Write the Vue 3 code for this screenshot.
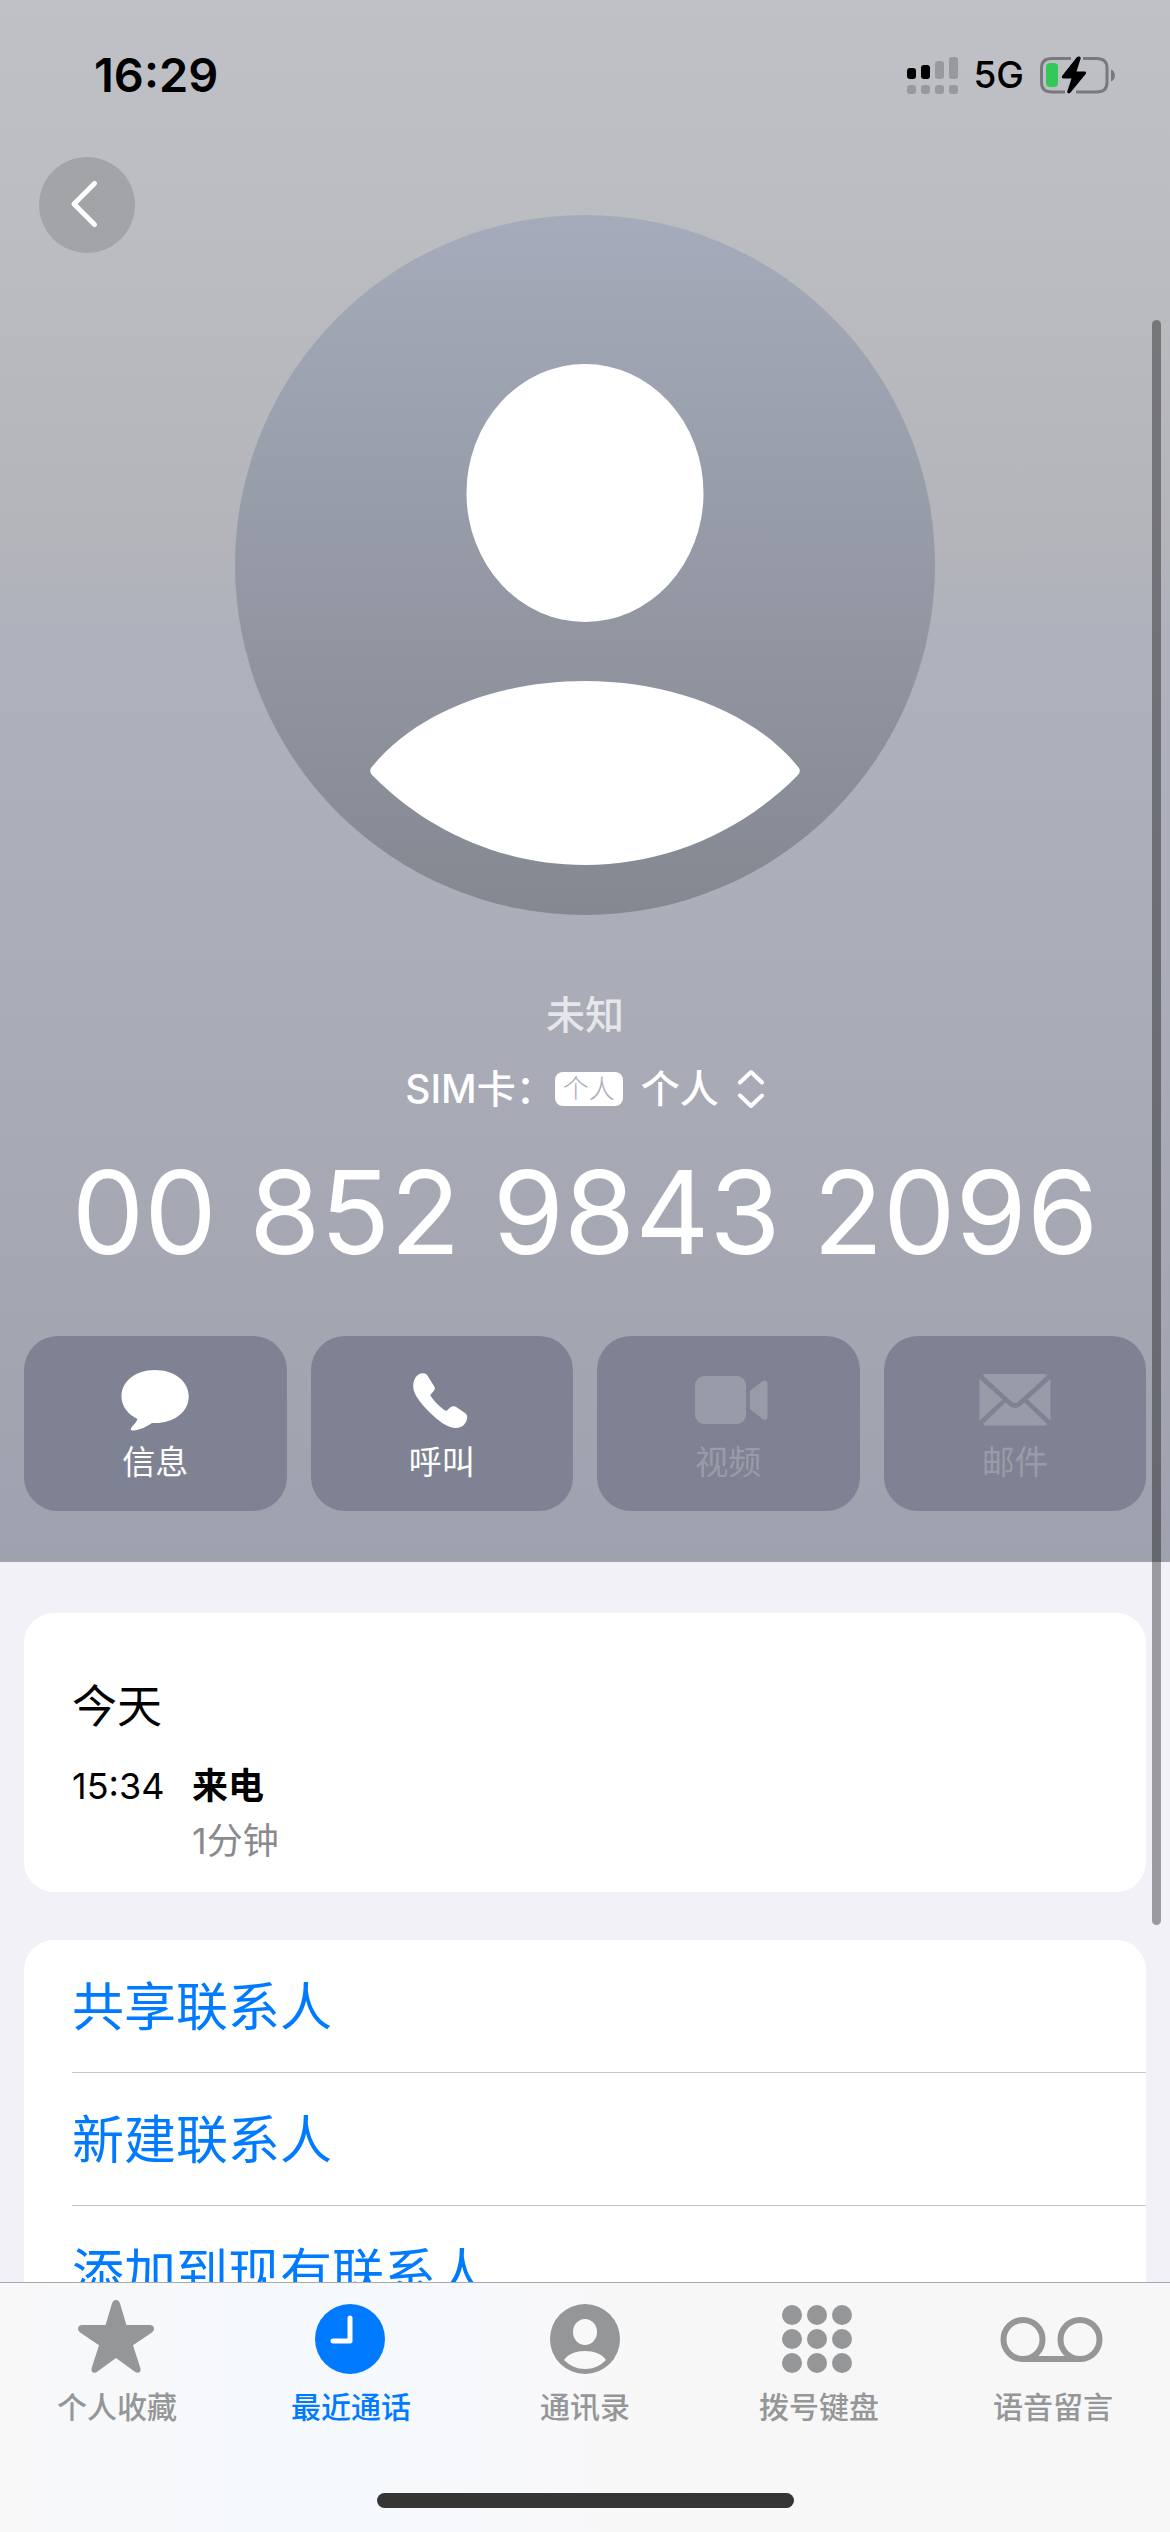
<script setup>
const actions = [
  { id: 'message', label: '信息', disabled: false },
  { id: 'call', label: '呼叫', disabled: false },
  { id: 'video', label: '视频', disabled: true },
  { id: 'mail', label: '邮件', disabled: true }
]

const links = ['共享联系人', '新建联系人', '添加到现有联系人']

const tabs = [
  { id: 'favorites', label: '个人收藏' },
  { id: 'recents', label: '最近通话' },
  { id: 'contacts', label: '通讯录' },
  { id: 'keypad', label: '拨号键盘' },
  { id: 'voicemail', label: '语音留言' }
]
const current = 'recents'
const dots = [15, 39, 63].flatMap((y) => [25, 50, 75].map((x) => ({ x, y })))
</script>

<template>
  <div class="phone">
    <main class="scroller">
      <header class="hero">
        <div class="status">
          <span class="clock">16:29</span>
          <div class="indicators">
            <svg class="signal" width="52" height="38" viewBox="0 0 52 38" aria-hidden="true">
              <g fill="#000">
                <rect x="0" y="12" width="9" height="11" rx="3" />
                <rect x="14" y="9" width="9" height="14" rx="3" />
              </g>
              <g fill="#98999d">
                <rect x="28" y="5" width="9" height="18" rx="3" />
                <rect x="42" y="1" width="9" height="22" rx="3" />
                <rect x="0" y="29" width="9" height="9" rx="3" />
                <rect x="14" y="29" width="9" height="9" rx="3" />
                <rect x="28" y="29" width="9" height="9" rx="3" />
                <rect x="42" y="29" width="9" height="9" rx="3" />
              </g>
            </svg>
            <span class="network">5G</span>
            <svg class="battery" width="76" height="38" viewBox="0 0 76 38" aria-hidden="true">
              <path d="M31 2.500H12C5 2.500 1.500 6 1.500 12V26.500C1.500 32.500 5 36 12 36H25M43 2.500H56.500C63.500 2.500 67 6 67 12V26.500C67 32.500 63.500 36 56.500 36H36" fill="none" stroke="#78797d" stroke-width="3" />
              <rect x="6" y="7" width="12" height="24" rx="4" fill="#34c759" />
              <path d="M37 1C39 -.2 41.300 .5 40.500 3L36.500 15.500H44.500C46.200 15.500 46.500 17 45.500 18.300L30.500 36.500C28.800 38.200 26.800 37.200 27.400 35L31.500 22.500H23.500C21.800 22.500 21.300 21 22.400 19.600Z" fill="#000" />
              <path d="M71 13.500C76.300 15.500 76.300 23.500 71 25.500Z" fill="#78797d" />
            </svg>
          </div>
        </div>

        <div class="portrait">
          <button class="back" type="button" aria-label="返回">
            <svg width="96" height="96" viewBox="0 0 96 96" aria-hidden="true">
              <path d="M55.500 26.500L35 47L55.500 67.500" fill="none" stroke="#fff" stroke-width="5" stroke-linecap="round" stroke-linejoin="round" />
            </svg>
          </button>
          <svg class="avatar" viewBox="0 0 700 700" aria-hidden="true">
            <defs>
              <linearGradient id="avatar-fill" x1="0" y1="0" x2="0" y2="1">
                <stop offset="0" stop-color="#a5abba" />
                <stop offset="1" stop-color="#848891" />
              </linearGradient>
            </defs>
            <circle cx="350" cy="350" r="350" fill="url(#avatar-fill)" />
            <ellipse cx="350" cy="278" rx="118.500" ry="129" fill="#fff" />
            <path d="M136 553C180 498 262 466 350 466S520 498 564 553Q566 557 563 560C505 619 428 650 350 650S195 619 137 560Q134 557 136 553Z" fill="#fff" />
          </svg>
        </div>

        <p class="unknown">未知</p>
        <button class="sim" type="button">
          <span>SIM卡：</span>
          <span class="badge">个人</span>
          <span>个人</span>
          <svg width="28" height="40" viewBox="0 0 28 40" aria-hidden="true">
            <path d="M3 13.500L14 3L25 13.500M3 26.500L14 37L25 26.500" fill="none" stroke="#fff" stroke-width="4" stroke-linecap="round" stroke-linejoin="round" />
          </svg>
        </button>
        <h1 class="number">00 852 9843 2096</h1>

        <div class="actions">
          <button v-for="a in actions" :key="a.id" type="button" class="action" :disabled="a.disabled">
            <svg width="80" height="64" viewBox="0 0 80 64" fill="currentColor" aria-hidden="true">
              <path v-if="a.id === 'message'" d="M40 2C59 2 73.700 13 73.700 28.400S59 55 40 55H37C32 58.500 25 62 18.500 62.500C15.500 62.700 15 61 17 58.700C19.500 56 21.500 54 22.500 51C13 46 6.500 38.500 6.500 28.400C6.500 13 21 2 40 2Z" />
              <path v-if="a.id === 'call'" transform="translate(2 0)" d="M19.100 5.300C21.500 5.300 23 6.500 24 8.500L30.300 18.500C31.300 20.300 30.800 21.800 29.600 23.200L27 26C26.200 27 26.500 27.800 27 28.600C30 33 35 38.500 40.500 42.300C41.500 42.900 42.400 43 43.200 42.200L46.500 39.300C48.300 38 50.300 37.700 52.200 39L61 45C63.300 46.600 63.700 49 62.800 52C61.200 57 57 60 51.700 60C45 60 37 55 29 47.500C19 38 9.200 27 9.200 18.700C9.200 11 13 5.300 19.100 5.300Z" />
              <template v-if="a.id === 'video'">
                <rect x="7" y="8" width="51" height="48" rx="9" />
                <path d="M62 23L74 13.500C76.500 11.800 79.500 12.500 79.500 15.500V49C79.500 52 76.500 52.500 74 50.500L62 41Z" />
              </template>
              <template v-if="a.id === 'mail'">
                <path d="M8 7.500Q9 6 11 6H69Q71 6 72 7.500L43.500 33.500Q40 36.500 36.500 33.500Z" />
                <path d="M4.500 11L27.500 31.500L4.500 52.500ZM75.500 11V52.500L52.500 31.500Z" />
                <path d="M8 56L30.500 34.500L34 37.500Q40 42.500 46 37.500L49.500 34.500L72 56Q71 57.500 69 57.500H11Q9 57.500 8 56Z" />
              </template>
            </svg>
            <span>{{ a.label }}</span>
          </button>
        </div>
      </header>

      <section class="card history">
        <h2>今天</h2>
        <dl>
          <dt>15:34</dt>
          <dd class="kind">来电</dd>
          <dd class="length">1分钟</dd>
        </dl>
      </section>

      <ul class="card links">
        <li v-for="l in links" :key="l"><button type="button">{{ l }}</button></li>
      </ul>

      <div class="thumb" aria-hidden="true"></div>
    </main>

    <footer class="tabbar">
      <nav class="tabs">
        <button v-for="t in tabs" :key="t.id" type="button" class="tab" :class="{ active: t.id === current }">
          <svg width="108" height="76" viewBox="-2 0 108 76" fill="currentColor" aria-hidden="true">
            <path v-if="t.id === 'favorites'" d="M51 0Q54 0 55 3.500L61.400 25H84.500Q89 25 89 29Q89 31 86.500 32.800L68 45.300L75.500 68.500Q76 72.700 72.500 72.700Q71 72.700 69.500 71.500L51 58L32.500 71.500Q31 72.700 29.500 72.700Q26 72.700 26.500 68.500L34 45.300L15.500 32.800Q13 31 13 29Q13 25 17.500 25H40.600L47 3.500Q48 0 51 0Z" />
            <template v-if="t.id === 'recents'">
              <circle cx="51" cy="39" r="35" />
              <path d="M51 18V41H34" fill="none" stroke="#fff" stroke-width="5" stroke-linecap="round" stroke-linejoin="round" />
            </template>
            <template v-if="t.id === 'contacts'">
              <circle cx="52" cy="39" r="35" />
              <ellipse cx="52" cy="32" rx="12" ry="13" fill="#f8f8f8" />
              <path d="M31 60C35 54 43 51 52 51S69 54 73 60C67 66 60 69 52 69S37 66 31 60Z" fill="#f8f8f8" />
            </template>
            <template v-if="t.id === 'keypad'">
              <circle v-for="d in dots" :key="d.x + '-' + d.y" :cx="d.x" :cy="d.y" r="10" />
            </template>
            <g v-if="t.id === 'voicemail'" fill="none" stroke="currentColor" stroke-width="6">
              <circle cx="22" cy="39.500" r="19.500" />
              <circle cx="79" cy="39.500" r="19.500" />
              <path d="M22 59H79" />
            </g>
          </svg>
          <span>{{ t.label }}</span>
        </button>
      </nav>
      <div class="home"></div>
    </footer>
  </div>
</template>

<style>
body {
  margin: 0;
}
</style>

<style scoped>
.phone {
  display: flex;
  flex-direction: column;
  height: 100vh;
  overflow: hidden;
  background: #f2f1f7;
  color: #000;
  font-family: Inter, "Noto Sans CJK SC", sans-serif;
}

button {
  padding: 0;
  border: 0;
  background: none;
  color: inherit;
  font: inherit;
}

h1,
h2,
p,
dl,
dd,
ul {
  margin: 0;
  padding: 0;
}

.scroller {
  position: relative;
  flex: 1;
  min-height: 0;
  overflow: hidden;
}

.hero {
  display: flex;
  flex-direction: column;
  padding-bottom: 51px;
  background: linear-gradient(#c0c1c6 0%, #bbbcc0 16%, #b4b5ba 34%, #afb2bc 40%, #abadb8 60%, #a5a7b3 80%, #9fa1ae 100%);
  color: #fff;
}

.status {
  display: flex;
  align-items: center;
  justify-content: space-between;
  height: 149px;
  padding: 0 54px 0 94px;
  color: #000;
}

.clock {
  font-size: 47px;
  font-weight: 600;
}

.indicators {
  display: flex;
  align-items: center;
}

.network {
  margin: 0 16px 0 14px;
  font-size: 37px;
  font-weight: 500;
}

.portrait {
  display: grid;
  grid-template-columns: 1fr minmax(0, 700px) 1fr;
  align-items: start;
  padding-top: 8px;
}

.back {
  width: 96px;
  height: 96px;
  margin-left: 39px;
  border-radius: 50%;
  background: #a3a4a8;
}

.back svg,
.avatar {
  display: block;
}

.avatar {
  width: 100%;
  margin-top: 58px;
}

.unknown {
  margin-top: 72px;
  color: #e6e7eb;
  font-size: 39px;
  font-weight: 500;
  line-height: 56px;
  text-align: center;
}

.sim {
  display: flex;
  align-items: center;
  align-self: center;
  gap: 18px;
  margin-top: 18px;
  font-size: 39px;
  font-weight: 500;
  line-height: 56px;
}

.badge {
  padding: 0 8px;
  margin-left: -18px;
  border-radius: 8px;
  background: #fff;
  color: #a8aab6;
  font-size: 26px;
  font-weight: 300;
  line-height: 34px;
}

.number {
  margin-top: 26px;
  font-size: 115px;
  font-weight: 400;
  line-height: 140px;
  text-align: center;
  white-space: nowrap;
}

.actions {
  display: grid;
  grid-template-columns: repeat(4, 1fr);
  gap: 24px;
  margin-top: 53px;
  padding: 0 24px;
}

.action {
  display: flex;
  flex-direction: column;
  align-items: center;
  height: 175px;
  padding-top: 32px;
  border-radius: 34px;
  background: #7f8292;
  font-size: 33px;
  line-height: 48px;
}

.action span {
  margin-top: 6px;
}

.action:disabled {
  color: #999ba8;
}

.card {
  margin: 0 24px;
  border-radius: 30px;
  background: #fff;
}

.history {
  margin-top: 51px;
  padding: 64px 48px 24px;
}

.history h2 {
  font-size: 45px;
  font-weight: 400;
  line-height: 60px;
}

.history dl {
  display: grid;
  grid-template-columns: 120px 1fr;
  row-gap: 1px;
  margin-top: 22px;
  font-size: 36px;
  line-height: 54px;
}

.kind {
  font-weight: 700;
}

.length {
  grid-column: 2;
  color: #8a8a8e;
}

.links {
  margin-top: 48px;
  padding-left: 48px;
  list-style: none;
}

.links li + li {
  border-top: 1px solid #c6c6c8;
}

.links button {
  display: block;
  width: 100%;
  padding-top: 4px;
  color: #007aff;
  font-size: 52px;
  line-height: 128px;
  text-align: left;
}

.thumb {
  position: absolute;
  top: 320px;
  right: 9px;
  width: 9px;
  height: 1605px;
  border-radius: 5px;
  background: rgba(0, 0, 0, 0.36);
}

.tabbar {
  display: flex;
  flex-direction: column;
  align-items: center;
  border-top: 1px solid #a9a9ac;
  background: linear-gradient(90deg, #f8f8f9 0%, #f5f9fd 28%, #f8f8fa 48%, #f7f7f7 60%);
}

.tabs {
  display: grid;
  grid-template-columns: repeat(5, 1fr);
  align-self: stretch;
  padding-top: 17px;
}

.tab {
  display: flex;
  flex-direction: column;
  align-items: center;
  gap: 11px;
  color: #959697;
  font-size: 30px;
  font-weight: 500;
  line-height: 40px;
}

.tab.active {
  color: #007aff;
}

.home {
  width: 417px;
  height: 15px;
  margin: 66px 0 24px;
  border-radius: 8px;
  background: #353535;
}
</style>
